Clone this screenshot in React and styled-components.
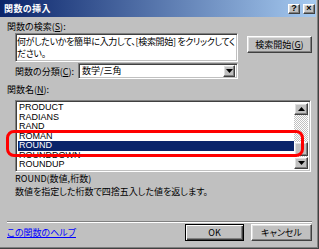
import styled, { createGlobalStyle } from 'styled-components';

const GlobalStyle = createGlobalStyle`
  html, body {
    margin: 0;
    padding: 0;
    background: #c0c0c0;
  }
  body {
    font-family: "Noto Sans CJK JP", "Liberation Sans", sans-serif;
    font-size: 9px;
    color: #000;
    font-feature-settings: "palt";
  }
`;

const FUNCTIONS = ['PRODUCT', 'RADIANS', 'RAND', 'ROMAN', 'ROUND', 'ROUNDDOWN', 'ROUNDUP'];

const raised = `
  background: #c0c0c0;
  border: 1px solid;
  border-color: #fff #404040 #404040 #fff;
  box-shadow: inset -1px -1px #808080, inset 1px 1px #dfdfdf;
  box-sizing: border-box;
`;

const sunken = `
  background: #fff;
  border: 1px solid;
  border-color: #808080 #fff #fff #808080;
  box-shadow: inset 1px 1px #404040, inset -1px -1px #c0c0c0;
  box-sizing: border-box;
`;

const Window = styled.div`
  position: relative;
  width: 319px;
  height: 249px;
  box-sizing: border-box;
  padding: 0 3px 2px 0;
  background: #c0c0c0;
  box-shadow: inset -1px -1px #404040, inset -2px -2px #808080;
  display: flex;
  flex-direction: column;
`;

const TitleBar = styled.div`
  height: 17px;
  flex-shrink: 0;
  display: flex;
  align-items: center;
  padding: 0 1px 0 4px;
  background: linear-gradient(to right, #0a246a, #a6caf0);
`;

const Title = styled.span`
  color: #fff;
  font-weight: bold;
  font-size: 9px;
  letter-spacing: 0.4px;
`;

const CaptionButtons = styled.div`
  margin-left: auto;
  display: flex;
  gap: 3px;
`;

const CapBtn = styled.div`
  ${raised}
  width: 12px;
  height: 10px;
  display: flex;
  align-items: center;
  justify-content: center;
  font-family: "Liberation Sans", sans-serif;
  font-weight: bold;
  font-size: 9px;
  line-height: 1;
`;

const Body = styled.div`
  flex: 1;
  display: flex;
  flex-direction: column;
  padding: 4px 4px 6px 7px;
`;

const Label = styled.div`
  line-height: 12px;
  height: 12px;
  white-space: nowrap;
  margin-top: ${(p) => p.$top || 0}px;
`;

const SearchRow = styled.div`
  display: flex;
  align-items: flex-start;
  margin-left: 8px;
`;

const SearchBox = styled.div`
  ${sunken}
  width: 223px;
  height: 29px;
  padding: 2px 1px;
  line-height: 12px;
  letter-spacing: -0.35px;
  white-space: nowrap;
  overflow: hidden;
`;

const Button = styled.div`
  ${raised}
  width: ${(p) => p.$w}px;
  height: 17px;
  display: flex;
  align-items: center;
  justify-content: center;
  white-space: nowrap;
  margin-left: ${(p) => p.$ml || 0}px;
  margin-top: ${(p) => p.$mt || 0}px;
  ${(p) =>
    p.$default &&
    `
    border: 1px solid #000;
    box-shadow: inset 1px 1px #fff, inset -1px -1px #404040, inset -2px -2px #808080;
  `}
`;

const CategoryRow = styled.div`
  display: flex;
  align-items: center;
  width: 223px;
  margin: 1px 0 0 8px;
`;

const Combo = styled.div`
  ${sunken}
  margin-left: auto;
  width: 160px;
  height: 16px;
  display: flex;
  align-items: center;
  padding: 2px;
`;

const ComboText = styled.span`
  padding-left: 1px;
  line-height: 12px;
`;

const ArrowBtn = styled.div`
  ${raised}
  margin-left: auto;
  width: ${(p) => p.$w || 12}px;
  height: 12px;
  flex-shrink: 0;
  display: flex;
  align-items: center;
  justify-content: center;
`;

const ListWrap = styled.div`
  ${sunken}
  position: relative;
  margin: 4px 0 0 8px;
  width: 296px;
  height: 72px;
  padding: 2px;
  display: flex;
`;

const List = styled.div`
  flex: 1;
  overflow: hidden;
`;

const Item = styled.div`
  height: 9.5px;
  line-height: 9.5px;
  padding-left: 1px;
  font-family: "Liberation Sans", sans-serif;
  font-size: 9px;
  background: ${(p) => (p.$selected ? '#0a246a' : 'transparent')};
  color: ${(p) => (p.$selected ? '#fff' : '#000')};
`;

const ScrollBar = styled.div`
  width: 14px;
  display: flex;
  flex-direction: column;
`;

const Track = styled.div`
  flex: 1;
  display: flex;
  flex-direction: column;
  background-color: #fff;
  background-image: conic-gradient(#c0c0c0 25%, #fff 0 50%, #c0c0c0 0 75%, #fff 0);
  background-size: 2px 2px;
`;

const Thumb = styled.div`
  ${raised}
  margin-top: 27px;
  height: 14px;
`;

const Highlight = styled.div`
  position: absolute;
  left: -10px;
  top: 29px;
  width: 298px;
  height: 27px;
  box-sizing: border-box;
  border: 3px solid #ff0000;
  border-radius: 8px;
  pointer-events: none;
`;

const Desc = styled.div`
  margin-left: 8px;
  line-height: 13px;
  white-space: nowrap;
`;

const Separator = styled.div`
  margin-top: auto;
  border-top: 1px solid #808080;
  border-bottom: 1px solid #fff;
`;

const Footer = styled.div`
  display: flex;
  align-items: center;
  height: 17px;
  margin-top: 1px;
`;

const HelpLink = styled.a`
  color: #0000ff;
  text-decoration: underline;
  cursor: pointer;
`;

const DialogButtons = styled.div`
  margin-left: auto;
  display: flex;
  gap: 7px;
`;

const Tri = ({ up }) => (
  <svg width="7" height="4" viewBox="0 0 7 4">
    <polygon points={up ? '3.5,0 7,4 0,4' : '0,0 7,0 3.5,4'} fill="#000" />
  </svg>
);

export default function App() {
  return (
    <>
      <GlobalStyle />
      <Window>
        <TitleBar>
          <Title>関数の挿入</Title>
          <CaptionButtons>
            <CapBtn>?</CapBtn>
            <CapBtn>×</CapBtn>
          </CaptionButtons>
        </TitleBar>
        <Body>
          <Label>
            関数の検索(<u>S</u>):
          </Label>
          <SearchRow>
            <SearchBox>
              何がしたいかを簡単に入力して、[検索開始] をクリックしてく
              <br />
              ださい。
            </SearchBox>
            <Button $w={65} $ml={9} $mt={3}>
              検索開始(<u>G</u>)
            </Button>
          </SearchRow>
          <CategoryRow>
            <span>
              関数の分類(<u>C</u>):
            </span>
            <Combo>
              <ComboText>数学/三角</ComboText>
              <ArrowBtn>
                <Tri />
              </ArrowBtn>
            </Combo>
          </CategoryRow>
          <Label $top={5}>
            関数名(<u>N</u>):
          </Label>
          <ListWrap>
            <List>
              {FUNCTIONS.map((f) => (
                <Item key={f} $selected={f === 'ROUND'}>
                  {f}
                </Item>
              ))}
            </List>
            <ScrollBar>
              <ArrowBtn $w={14}>
                <Tri up />
              </ArrowBtn>
              <Track>
                <Thumb />
              </Track>
              <ArrowBtn $w={14}>
                <Tri />
              </ArrowBtn>
            </ScrollBar>
            <Highlight />
          </ListWrap>
          <Desc>
            ROUND(数値,桁数)
            <br />
            数値を指定した桁数で四捨五入した値を返します。
          </Desc>
          <Separator />
          <Footer>
            <HelpLink>この関数のヘルプ</HelpLink>
            <DialogButtons>
              <Button $w={59} $default>
                OK
              </Button>
              <Button $w={61}>キャンセル</Button>
            </DialogButtons>
          </Footer>
        </Body>
      </Window>
    </>
  );
}
